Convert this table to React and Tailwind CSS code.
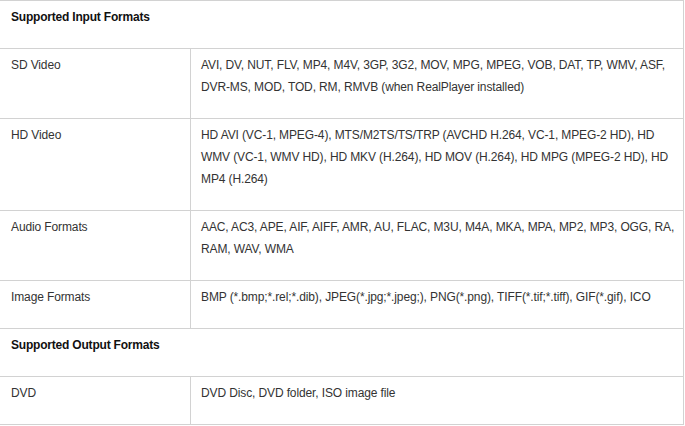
import React from "react";

const rows = [
  { type: "head", text: "Supported Input Formats" },
  {
    label: "SD Video",
    text: "AVI, DV, NUT, FLV, MP4, M4V, 3GP, 3G2, MOV, MPG, MPEG, VOB, DAT, TP, WMV, ASF, DVR-MS, MOD, TOD, RM, RMVB (when RealPlayer installed)",
  },
  {
    label: "HD Video",
    text: "HD AVI (VC-1, MPEG-4), MTS/M2TS/TS/TRP (AVCHD H.264, VC-1, MPEG-2 HD), HD WMV (VC-1, WMV HD), HD MKV (H.264), HD MOV (H.264), HD MPG (MPEG-2 HD), HD MP4 (H.264)",
  },
  {
    label: "Audio Formats",
    text: "AAC, AC3, APE, AIF, AIFF, AMR, AU, FLAC, M3U, M4A, MKA, MPA, MP2, MP3, OGG, RA, RAM, WAV, WMA",
  },
  {
    label: "Image Formats",
    text: "BMP (*.bmp;*.rel;*.dib), JPEG(*.jpg;*.jpeg;), PNG(*.png), TIFF(*.tif;*.tiff), GIF(*.gif), ICO",
  },
  { type: "head", text: "Supported Output Formats" },
  { label: "DVD", text: "DVD Disc, DVD folder, ISO image file" },
];

export default function App() {
  return (
    <div className="bg-white w-[685px] h-[426px] overflow-hidden">
      <div
        className="w-[684px] border-t border-r border-[#d2d2d2] text-[12px] leading-[22px] text-[#333333] tracking-[-0.12px]"
        style={{ fontFamily: '"Liberation Sans", Arial, sans-serif' }}
      >
        {rows.map((r, i) =>
          r.type === "head" ? (
            <div
              key={i}
              className="border-b border-[#d2d2d2] pl-[11px] pr-[10px] pt-[5px] pb-[20px] font-bold text-[#111111] tracking-[-0.2px]"
            >
              {r.text}
            </div>
          ) : (
            <div key={i} className="flex border-b border-[#d2d2d2]">
              <div className="w-[191px] shrink-0 border-r border-[#d2d2d2] pl-[11px] pr-[10px] pt-[5px] pb-[20px]">
                {r.label}
              </div>
              <div className="flex-1 pl-[10px] pr-[8px] pt-[5px] pb-[20px]">
                {r.text}
              </div>
            </div>
          )
        )}
      </div>
    </div>
  );
}
